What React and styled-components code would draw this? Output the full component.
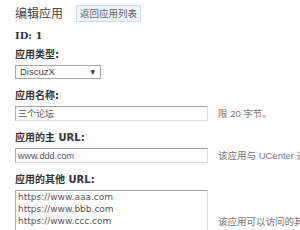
import { createGlobalStyle, styled } from 'styled-components';

const GlobalStyle = createGlobalStyle`
  html, body {
    margin: 0;
    padding: 0;
    background: #fff;
    overflow: hidden;
  }
  body {
    font-family: "DejaVu Sans", "Noto Sans CJK SC", sans-serif;
    font-size: 10px;
    color: #333;
  }
`;

export default function App() {
  return (
    <>
      <GlobalStyle />
      <Page>
        <Header>
          <Title>编辑应用</Title>
          <BackButton type="button">返回应用列表</BackButton>
        </Header>
        <IdRow>ID: 1</IdRow>

        <Field>
          <Label>应用类型:</Label>
          <Row>
            <SelectWrap>
              <Select defaultValue="DiscuzX">
                <option>DiscuzX</option>
                <option>UCHome</option>
                <option>其它</option>
              </Select>
              <Arrow>▼</Arrow>
            </SelectWrap>
          </Row>
        </Field>

        <Field>
          <Label>应用名称:</Label>
          <Row>
            <Input defaultValue="三个论坛" />
            <Note>限 20 字节。</Note>
          </Row>
        </Field>

        <Field>
          <Label>应用的主 URL:</Label>
          <Row>
            <Input defaultValue="www.ddd.com" />
            <Note>该应用与 UCenter 通信的主 URL 地址</Note>
          </Row>
        </Field>

        <Field>
          <Label>应用的其他 URL:</Label>
          <Row>
            <TextArea
              defaultValue={'https://www.aaa.com\nhttps://www.bbb.com\nhttps://www.ccc.com'}
            />
            <Note>该应用可以访问的其他 URL 地址</Note>
          </Row>
        </Field>
      </Page>
    </>
  );
}

const Page = styled.div`
  padding: 5px 15px;
  width: 270px;
`;
const Header = styled.div`
  display: flex;
  align-items: center;
  gap: 13px;
  height: 17px;
`;
const Title = styled.h3`
  margin: 0;
  font-size: 12px;
  font-weight: normal;
  color: #444;
  line-height: 14px;
`;
const BackButton = styled.button`
  height: 17px;
  padding: 0 3px;
  border: 1px solid #cfdbe3;
  background: #eef4f8;
  color: #666;
  font-family: "DejaVu Sans", "Noto Sans CJK SC", sans-serif;
  font-size: 9.5px;
  line-height: 15px;
  cursor: pointer;
`;
const IdRow = styled.div`
  margin-top: 7px;
  font-family: "DejaVu Serif", serif;
  font-weight: bold;
  font-size: 10px;
  line-height: 14px;
`;
const Field = styled.div`
  margin-top: 5px;
  & + & {
    margin-top: 10px;
  }
`;
const Label = styled.div`
  font-weight: bold;
  font-size: 10px;
  line-height: 14px;
  color: #333;
`;
const Row = styled.div`
  margin-top: 3px;
  display: flex;
  align-items: center;
  gap: 10px;
`;
const SelectWrap = styled.div`
  position: relative;
  width: 86px;
  height: 14px;
`;
const Select = styled.select`
  appearance: none;
  width: 100%;
  height: 100%;
  margin: 0;
  padding: 0 0 0 4px;
  border: 1px solid #a6a6a6;
  border-radius: 0;
  background: #fff;
  color: #444;
  font-family: "Liberation Sans", "Noto Sans CJK SC", sans-serif;
  font-size: 9.5px;
  line-height: 12px;
`;
const Arrow = styled.span`
  position: absolute;
  right: 6px;
  top: 3px;
  font-size: 6px;
  line-height: 8px;
  color: #333;
  pointer-events: none;
`;
const inputBase = `
  box-sizing: border-box;
  flex: none;
  width: 193px;
  margin: 0;
  border: 1px solid #ddd;
  border-top-color: #a0a0a0;
  border-left-color: #b0b0b0;
  border-radius: 0;
  background: #fff;
  color: #555;
  outline: none;
`;
const Input = styled.input`
  ${inputBase}
  height: 15px;
  padding: 0 2px;
  font-family: "Liberation Sans Narrow", "Liberation Sans", "Noto Sans CJK SC", sans-serif;
  font-size: 9px;
`;
const TextArea = styled.textarea`
  ${inputBase}
  height: 64px;
  padding: 0 2px;
  font-family: "DejaVu Sans", "Noto Sans CJK SC", sans-serif;
  font-size: 9px;
  line-height: 12px;
  resize: none;
  overflow: hidden;
`;
const Note = styled.span`
  white-space: nowrap;
  color: #777;
  font-family: "Liberation Sans", "Noto Sans CJK SC", sans-serif;
  font-size: 9.5px;
  line-height: 14px;
`;
